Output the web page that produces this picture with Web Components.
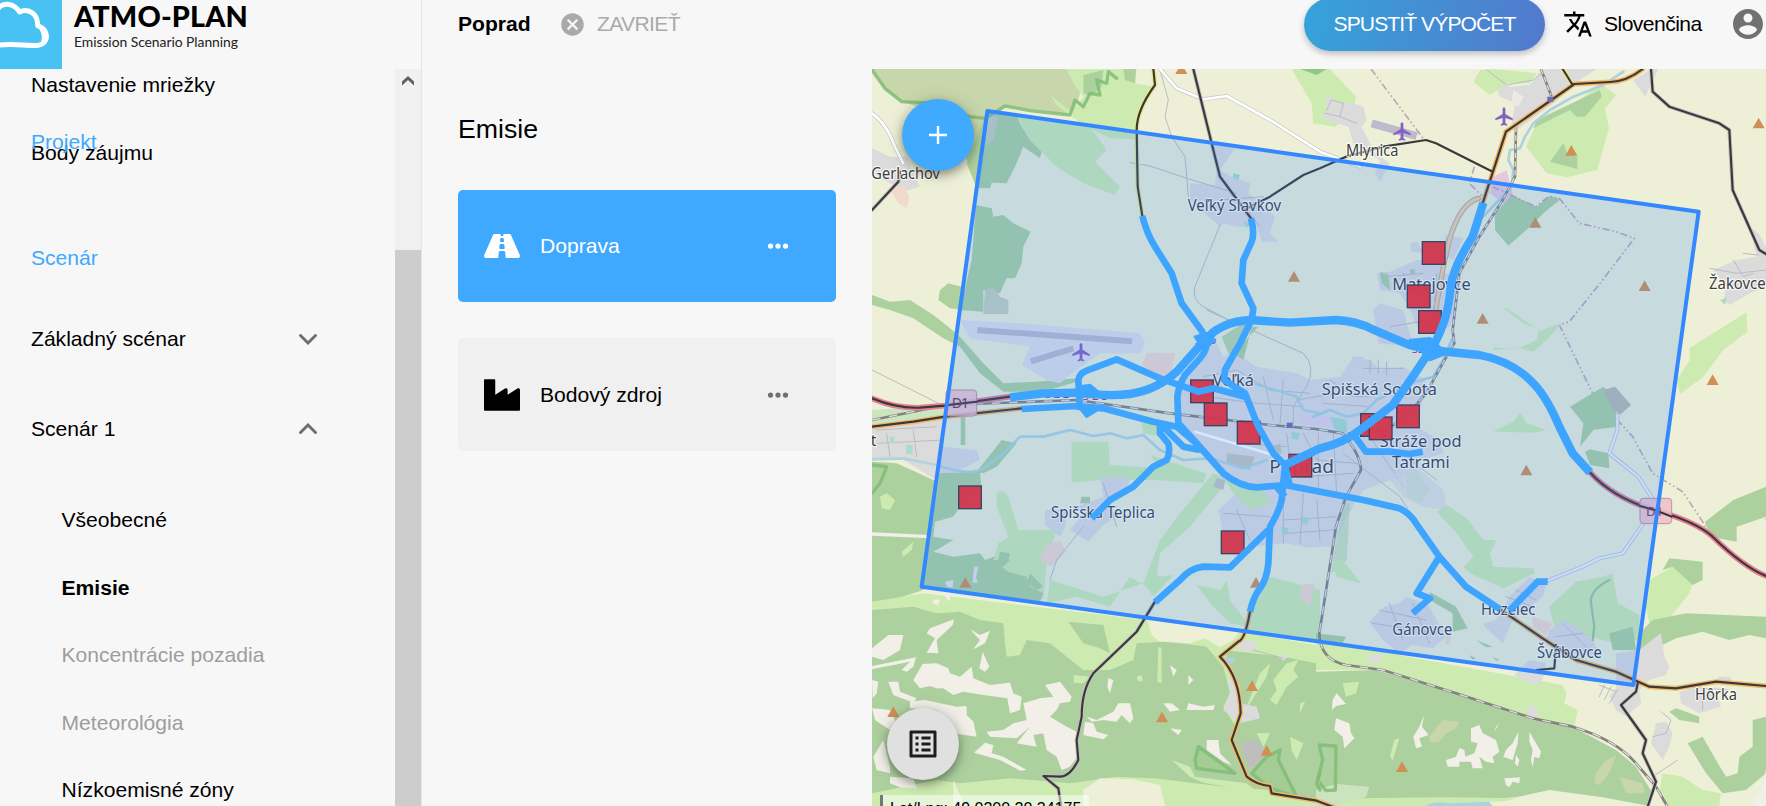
<!DOCTYPE html>
<html lang="sk">
<head>
<meta charset="utf-8">
<title>ATMO-PLAN</title>
<style>
html,body{margin:0;height:100%;overflow:hidden;background:#f7f7f7}
body{font-family:"Liberation Sans",Arial,sans-serif;font-size:21.1px;color:#000}
</style>
</head>
<body>
<atmo-app></atmo-app>

<template id="t-app">
<style>
:host{display:grid;grid-template-columns:422px 1fr;grid-template-rows:69px 737px;width:1766px;height:806px;overflow:hidden}
.side{overflow:hidden;display:flex;border-right:1px solid #e6e6e6;box-sizing:border-box}
atmo-logo{border-right:1px solid #e6e6e6;box-sizing:border-box}
.main{display:grid;grid-template-columns:450px 894px;overflow:hidden}
.panel{padding:0 36px}
h1{font-size:26.7px;font-weight:400;margin:44px 0 44px;line-height:33px}
.cards{display:grid;gap:36px}
</style>
<atmo-logo></atmo-logo>
<atmo-topbar></atmo-topbar>
<div class="side"><atmo-nav></atmo-nav><atmo-scroll></atmo-scroll></div>
<div class="main">
<div class="panel"><h1>Emisie</h1>
<div class="cards">
<atmo-card active><svg slot="icon" viewBox="0 0 576 512" width="36" height="32" fill="currentColor"><path d="M573.19 402.67l-139.79-320C428.43 71.29 417.6 64 405.68 64h-97.59l2.45 23.16c.5 4.72-3.21 8.84-7.96 8.84h-29.16c-4.75 0-8.46-4.12-7.96-8.84L267.91 64h-97.59c-11.93 0-22.76 7.29-27.73 18.67L2.8 402.67C-6.45 423.86 8.31 448 30.54 448h196.84l10.31-97.68c.86-8.14 7.72-14.32 15.91-14.32h68.8c8.19 0 15.05 6.18 15.91 14.32L348.62 448h196.84c22.23 0 36.99-24.14 27.73-45.33zM260.4 135.16a8 8 0 0 1 7.96-7.16h39.29c4.09 0 7.53 3.09 7.96 7.16l4.6 43.58c.75 7.09-4.81 13.26-11.93 13.26h-40.54c-7.13 0-12.68-6.17-11.93-13.26l4.59-43.58zM315.64 304h-55.29c-9.5 0-16.91-8.23-15.91-17.68l5.07-48c.86-8.14 7.72-14.32 15.91-14.32h45.15c8.19 0 15.05 6.18 15.91 14.32l5.07 48c1 9.45-6.41 17.68-15.91 17.68z"/></svg>Doprava</atmo-card>
<atmo-card><svg slot="icon" viewBox="0 0 512 512" width="36" height="36" fill="currentColor"><path d="M475 164L336 252V184c0-19-21-30-37-20L160 252V48c0-9-7-16-16-16H16C7 32 0 39 0 48v416c0 9 7 16 16 16h480c9 0 16-7 16-16V184c0-19-21-30-37-20z"/></svg>Bodový zdroj</atmo-card>
</div></div>
<atmo-map></atmo-map>
</div>
</template>

<template id="t-logo">
<style>
:host{display:flex;overflow:hidden}
.t{padding-left:12px;white-space:nowrap;font-family:Lato,sans-serif}
b{display:block;font-weight:900;font-size:28.8px;line-height:32px;letter-spacing:.15px}
span{display:block;font-size:13.9px;line-height:20px;letter-spacing:-.05px;color:#222}
</style>
<svg width="62" height="69" viewBox="0 0 186 207"><rect width="186" height="207" fill="#48c1f3"/><path d="M-8 28C12 2 44 12 59 36c22-12 55 2 54 41 34 14 36 52 2 59-34 4-70-8-123 0" fill="none" stroke="#fff" stroke-width="15" stroke-linejoin="round"/><path d="M108 76c40 10 46 56 10 66 12-26 10-46-10-66z" fill="#fff"/></svg>
<div class="t"><b>ATMO-PLAN</b><span>Emission Scenario Planning</span></div>
</template>

<template id="t-topbar">
<style>
:host{display:flex;height:48px;align-items:center;padding-left:36px;position:relative;z-index:2}
svg{display:block;flex:none}
b{width:101px;flex:none}
.close{display:flex;align-items:center;gap:11px;color:#aaa;letter-spacing:-.65px}
.grow{flex:1}
.run{width:241px;height:53px;border-radius:27px;display:grid;place-items:center;color:#fff;background:linear-gradient(100deg,#35a3db,#5379cc);box-shadow:0 3px 6px rgba(0,0,0,.24);letter-spacing:-.92px;line-height:24px}
.lang{display:flex;align-items:center;gap:11px;margin-left:18px;width:167px}
.lang span{letter-spacing:-.55px}
</style>
<b>Poprad</b>
<div class="close"><svg width="27" height="27" viewBox="0 0 24 24" fill="#aaa"><path d="M12 2C6.47 2 2 6.47 2 12s4.470 10 10 10 10-4.470 10-10S17.530 2 12 2zm5 13.590L15.590 17 12 13.410 8.410 17 7 15.590 10.590 12 7 8.410 8.410 7 12 10.590 15.590 7 17 8.410 13.410 12 17 15.590z"/></svg><span>ZAVRIEŤ</span></div>
<div class="grow"></div>
<div class="run">SPUSTIŤ VÝPOČET</div>
<div class="lang"><svg width="30" height="30" viewBox="0 0 24 24"><path d="M12.870 15.070l-2.540-2.510.030-.030c1.740-1.940 2.980-4.170 3.710-6.530H17V4h-7V2H8v2H1v1.990h11.170C11.500 7.920 10.440 9.750 9 11.350 8.070 10.320 7.300 9.190 6.690 8h-2c.730 1.630 1.730 3.170 2.980 4.560l-5.090 5.020L4 19l5-5 3.110 3.110.760-2.040zM18.500 10h-2L12 22h2l1.120-3h4.750L21 22h2l-4.500-12zm-2.620 7l1.620-4.330L19.120 17h-3.240z"/></svg><span>Slovenčina</span></div>
<svg width="36" height="36" viewBox="0 0 24 24" fill="#717171"><path d="M12 2C6.480 2 2 6.480 2 12s4.480 10 10 10 10-4.480 10-10S17.520 2 12 2zm0 3c1.660 0 3 1.340 3 3s-1.340 3-3 3-3-1.340-3-3 1.340-3 3-3zm0 14.200c-2.500 0-4.710-1.280-6-3.220.030-1.990 4-3.080 6-3.080 1.990 0 5.970 1.090 6 3.080-1.290 1.940-3.500 3.220-6 3.220z"/></svg>
</template>

<template id="t-nav">
<style>
:host{display:block;width:395px;height:737px;overflow:hidden;position:relative}
div{height:67.5px;line-height:67.5px;padding-left:31px;white-space:nowrap;box-sizing:border-box}
.first{margin-top:-18px}
.blue{color:#3fa9ff}
.sec{margin-top:38px;margin-bottom:2.500px}
.grp{height:90px;line-height:90px;display:flex;align-items:center;justify-content:space-between;padding-right:77px}
.sub{padding-left:61.500px}
.grp+.sub{margin-top:12px}
.off{color:#9d9d9d}
.stick{position:absolute;left:0;top:39px}
</style>
<div class="first">Nastavenie mriežky</div>
<div>Body záujmu</div>
<div class="blue sec">Scenár</div>
<div class="grp">Základný scénar<svg width="20" height="12"><path d="M2.500 2.500L10 10l7.500-7.500" fill="none" stroke="#6e6e6e" stroke-width="2.900" stroke-linecap="round"/></svg></div>
<div class="grp">Scenár 1<svg width="20" height="12"><path d="M2.500 9.500L10 2l7.500 7.500" fill="none" stroke="#6e6e6e" stroke-width="2.900" stroke-linecap="round"/></svg></div>
<div class="sub">Všeobecné</div>
<div class="sub"><b>Emisie</b></div>
<div class="sub off">Koncentrácie pozadia</div>
<div class="sub off">Meteorológia</div>
<div class="sub">Nízkoemisné zóny</div>
<div class="stick blue">Projekt</div>
</template>

<template id="t-scroll">
<style>
:host{display:flex;flex-direction:column;width:26px;background:#f0f0f0;height:737px}
svg{height:181px;flex:none}
i{flex:1;background:#cdcdcd}
</style>
<svg width="26" height="181"><path d="M7 12.500L13 7l6 5.500v4L13 11l-6 5.500z" fill="#606060"/></svg><i></i>
</template>

<template id="t-card">
<style>
:host{display:flex;align-items:center;height:112px;border-radius:5px;background:#f0f0f0;padding:0 43px 0 26px;box-sizing:border-box;width:378px}
:host([active]){background:#3fa9ff;color:#fff;--dot:#fff}
:host(:not([active])){height:113px}
span{flex:1}
.i{width:56px;display:flex;align-items:center}
</style>
<div class="i"><slot name="icon"></slot></div><span><slot></slot></span>
<svg width="30" height="30" viewBox="0 0 24 24" style="fill:var(--dot,#707070)"><circle cx="6" cy="12" r="2.100"/><circle cx="12" cy="12" r="2.100"/><circle cx="18" cy="12" r="2.100"/></svg>
</template>

<template id="t-fab">
<style>
:host{position:absolute;width:72px;height:72px;border-radius:50%;display:grid;place-items:center;box-shadow:0 4px 10px rgba(0,0,0,.35),0 2px 20px rgba(0,0,0,.14)}
</style><slot></slot>
</template>

<template id="t-map">
<style>
:host{display:block;position:relative;width:894px;height:737px;overflow:hidden;background:#edf0d6}
.base{display:block}
.f{fill:#add19e}.g{fill:#cdebb0}.s{fill:#c8d7ab}.r{fill:#dcdbdc}.k{fill:#f2efe9}.o{fill:#f2dacb}.w{fill:#aad3df}
.ln{fill:none;stroke-linejoin:round;stroke-linecap:round}
.thin{stroke:#bdbcc4;stroke-width:3}
.river{stroke:#aad3df;stroke-width:8}
.white{stroke:#fff;stroke-width:8}
.wc{stroke:#c5c3c3;stroke-width:12}
.dk{stroke:#3a3838;stroke-width:6.500}
.bnd{stroke:#c2a3bd;stroke-width:5;stroke-dasharray:22 8 5 8 5 8;stroke-linecap:butt}
.edge{stroke:#7fbd74;stroke-width:10;opacity:.85}
.lb text{font-family:"Noto Sans",sans-serif;font-size:47px;fill:#3d3d3d;stroke:#fff;stroke-opacity:.75;stroke-width:7;paint-order:stroke;stroke-linejoin:round}
.lb .red{fill:#a2305c;font-size:34px;stroke-width:3}
.pk{fill:#d08f55}
.pl{fill:#8461c4}
.blue{stroke:#3da4ff;stroke-width:20;stroke-linecap:butt}
.sq rect{width:68px;height:68px;fill:#d13850;stroke:#34405e;stroke-width:4}
.add{left:30px;top:30px;background:#40aaff}
.leg{left:15px;top:639px;background:#e0e0e0}
.coord{position:absolute;left:8px;top:726px;height:24px;box-sizing:border-box;width:209px;border-left:3px solid #777;background:rgba(255,255,255,.5);padding-left:7px;font-size:16px;line-height:28px;white-space:pre}
</style>
<svg class="base" width="894" height="737" viewBox="6 27 2682 2211">
<defs>
<path id="peak" d="M0-17L18 15H-18z"/>
<path id="plane" transform="scale(2.750) translate(-11.500 -12)" d="M21 16v-2l-8-5V3.500c0-.830-.670-1.500-1.500-1.500S10 2.670 10 3.500V9l-8 5v2l8-2.500V19l-2 1.500V22l3.500-1 3.500 1v-1.500L13 19v-5.500l8 2.500z"/>
<path id="rail" d="M6 1080L230 1035 620 1020 900 1060 1200 1095 1338 1107 1418 1120Q1470 1180 1473 1230L1428 1310 1398 1400 1348 1720Q1350 1800 1428 1815L1538 1830 1758 1900 1988 1975 2108 2000Q2240 2040 2298 2110L2358 2180 2398 2250"/>
<path id="rail2" d="M2013 27L2043 105M1938 200L1935 350 1898 420 1828 530 1768 640 1748 810 1753 850 1718 910 1668 1000 1608 1070 1548 1110 1438 1120"/>
</defs>
<!-- north-west -->
<path class="s" d="M6 27H590L640 70 610 165 540 155 405 140 350 185 325 330 290 300 270 180 100 127 40 85z"/>
<path class="g" d="M590 27H800L795 70 850 80 800 180V238L720 235 640 195 600 165 640 110 610 70zM540 105L610 160 600 168 560 135zM440 165L660 200 710 270 675 305 750 380 735 405 640 370 560 320 480 240z"/>
<path class="f" d="M350 153L440 165 450 190 480 240 515 275 510 295 460 260 440 310 410 370 365 368 360 385 320 385 290 310zM318 435L365 445 370 470 400 465 430 490 482 515 460 560 455 610 435 655 410 655 390 700 340 690 340 755 270 750 305 600zM235 670L275 680 282 750 240 745 205 720 210 690zM6 705L60 725 120 720 190 765 235 800 270 830 340 910 400 970 500 965 620 955V965L520 995 400 995 330 940 270 860 220 835 130 775 60 750 6 735zM640 45L700 30 695 80 660 110 640 100zM760 27H798L795 70 765 60z"/>
<path d="M345 690L370 680 390 710 415 720V762H340zM350 165L385 170 370 240 345 260z" fill="#c6cfb9"/>
<path class="ln edge" d="M6 30L45 85 95 125 200 130 300 170 345 175 405 138 480 152 600 165 615 120 640 140 660 100 690 105 680 60 710 70 715 35 740 55"/>
<path class="r" d="M6 265L60 290 110 290 130 340 150 380 100 395 60 370 6 340zM1030 245L1095 265 1050 330 1085 350 1140 370 1135 400 1215 470 1200 520 1225 545 1175 545 1160 500 1100 500 1060 490 1050 500 960 420 960 370 1035 375 1040 330z"/>
<path class="o" d="M60 390L100 375 118 410 110 445 85 430zM830 878L915 880 905 930 870 955 815 915z"/>
<path class="g" d="M1265 27H1380L1458 110 1450 160 1395 200 1330 190 1325 130z"/>
<path class="f" d="M1290 27H1370L1340 45z" style="fill:#8cc983"/>
<!-- airport -->
<path d="M270 780L450 790 810 820 825 850 810 880 690 880 600 945 570 970 530 960 455 915 480 860 300 835z" fill="#dfdfe8"/>
<path d="M322 810L786 844M482 904L610 865" stroke="#bbbbcc" stroke-width="18" fill="none"/>
<!-- west -->
<path d="M6 1050L230 1035V1090L6 1105z" fill="#c9e6c0"/>
<path class="r" d="M6 1105L225 1070 220 1160 320 1170 330 1200 250 1240 190 1255 100 1200 6 1195z"/>
<path class="f" d="M6 1205L80 1210 195 1262 160 1590 6 1640zM210 1240L330 1235 335 1290 290 1310 250 1370 195 1385 190 1430 250 1440 190 1475 250 1490 330 1480 345 1500 400 1480 500 1530 500 1630 155 1580zM395 1140L440 1150 380 1220 340 1240 320 1235zM272 1070H286V1155H272z"/>
<path class="g" d="M605 1145H715L720 1215 870 1225 840 1185 990 1235 1010 1240 1000 1270 850 1260 690 1260 605 1268zM380 1300Q400 1280 415 1310L445 1410 560 1410 530 1510 520 1620 370 1500 385 1450 415 1430 380 1340zM1030 1240L1075 1260 960 1400 870 1480 860 1550 910 1545 850 1610 830 1580 780 1550 720 1640 620 1610 530 1630 540 1560 700 1610 820 1570 870 1440 930 1360zM815 1090L870 1085 880 1130 820 1120zM980 1575L1050 1590 1070 1560 1080 1620 1140 1700 1080 1690 1030 1640zM1200 1550L1350 1590V1750L1130 1710 1140 1660z"/>
<path class="o" d="M530 1455L570 1440 588 1475 545 1520 508 1500zM1295 1575L1335 1570 1320 1640 1290 1610z"/>
<path class="r" d="M690 1250L780 1255 770 1300 720 1330 740 1370 700 1395 655 1445 600 1410 640 1360 620 1340 700 1310zM525 1350L590 1350 585 1400 570 1430 525 1395z"/>
<path class="f" d="M390 1475L420 1480 415 1505 385 1500zM480 1540L520 1580 500 1590 470 1570zM635 1310H660V1330H630z"/>
<path class="k" d="M6 1417L180 1425V1435L6 1427z"/><path class="g" d="M30 1310L50 1300 75 1320 60 1350 35 1345zM95 1475L130 1445 125 1470 100 1490z"/>
<path class="ln edge" d="M6 1215L50 1220 30 1270 6 1300"/>
<!-- Poprad -->
<path class="r" d="M985 870L1040 850 1060 890 1100 880 1160 920 1280 940 1320 960 1410 950 1450 890 1500 900 1530 930 1600 920 1668 960 1660 1010 1640 1100 1710 1140 1720 1180 1650 1200 1640 1240 1560 1260 1480 1290 1430 1370 1390 1460 1310 1462 1250 1450 1140 1460 1060 1425 1045 1350 1100 1300 1060 1260 1000 1190 930 1120 930 960zM1420 960H1480V1080L1400 1100z" fill-opacity=".95"/>
<path d="M1120 900L1145 800 1165 800 1090 880z" fill="#add19e"/>
<path class="f" d="M1055 830L1135 780 1080 890z" opacity=".8"/><path class="g" d="M1060 1250L1180 1290 1200 1330 1140 1350 1090 1300z"/>
<path d="M1070 1180L1155 1190 1140 1230 1070 1210zM1040 1255L1065 1260 1060 1290 1030 1280zM1210 1160L1230 1150 1235 1180 1210 1185z" fill="#c5c5bf"/>
<path d="M1290 1060L1420 1075 1420 1105 1290 1090z" fill="#e4d3e6"/>
<path class="ln thin" d="M1000 950L1100 930 1200 990 1320 1000M1010 1010L1160 1030 1300 1040M1180 950L1210 1080M1240 960L1230 1090M1280 1020L1400 1000M1380 960L1450 1010 1500 1010M1360 1030L1500 1040M1100 1150L1250 1160M1250 1120L1260 1200M1300 1120L1340 1200 1460 1210M1345 1120L1345 1300M1390 1120L1400 1300M1300 1250L1450 1240M1060 1360L1200 1370M1100 1350L1140 1440M1240 1320L1240 1450M1300 1300L1290 1450M1340 1320L1350 1440M1240 1380L1400 1370M1250 1420L1390 1410M1500 900L1500 940M1525 900V940M1550 905V945M1480 925H1600M1500 1130L1600 1280M1620 1200L1700 1260M1420 1180L1590 1310 1640 1390M700 1270L740 1400M640 1350L740 1340M640 1400L560 1500 540 1560M20 1110L200 1100M50 1120L60 1190M130 1110L140 1190M20 1150L220 1140M780 308L840 318 950 355 1100 400"/>
<path class="ln thin" d="M870 30L895 120 885 170 905 230 945 290 955 410M1050 495L975 680Q965 720 1000 740L1075 780M1010 750L1300 880Q1340 920 1310 980L1270 1040V1090M6 930L215 1035M1060 360L1170 500M1050 420L1180 410"/>
<path fill="#a9dccb" d="M1265 1115L1290 1120 1285 1140 1265 1135zM1300 1370L1320 1375 1310 1395 1295 1390zM1235 1400L1255 1405 1250 1425 1235 1420zM1120 485L1140 490 1130 505zM1090 340L1110 345 1105 360 1088 355zM60 1130H72V1150H60zM108 1155H128V1182H108zM1380 1070L1430 1080 1430 1120 1400 1120z"/>
<!-- Velky lom and Matejovce -->
<path class="r" d="M1370 100L1395 125 1450 130 1480 140 1490 180 1475 200 1515 280 1560 310 1530 365 1515 340 1530 300 1450 250 1435 200 1355 175 1370 150zM1870 60L1920 80 1980 75 2010 35 2030 27H2180L2130 60 2050 130 1940 210 1925 190 1935 130 1890 110zM2290 60L2345 27H2365L2340 80 2325 110zM1525 850L1510 750 1530 730 1600 750 1630 860zM1530 690L1520 640 1560 635 1640 600 1700 600 1720 640 1770 650 1760 720 1740 800 1650 820 1620 750 1590 700zM1620 550L1640 545 1665 580 1625 575zM1725 525L1780 535 1750 600 1725 585zM1450 890L1480 890 1490 920 1450 910z"/>
<path fill="#efe9e4" d="M1930 90L1960 110 1945 140 1925 130z"/>
<path fill="#e6c9dc" d="M1870 350L1910 330 1930 410 1905 435 1860 400z"/>
<path class="g" d="M1830 30L1870 27 2000 40 1980 70 1910 70 1860 105 1810 65zM2190 70L2238 105 2205 145 2217 205 2182 330 2090 352 2030 340 1968 260 2000 190 2080 160z"/>
<path class="f" d="M2190 90L2195 110 2145 170 2120 170 2100 150 1990 205 2000 180zM2080 250L2090 275 2122 292 2122 327 2040 305z"/>
<path class="f" d="M1925 405L2000 440 2040 408 2072 418 2020 460 1980 500 1915 557 1875 510 1875 460z"/>
<path class="ln river" d="M2260 35L2200 75 2110 110 2040 150 1990 190 1965 230 1950 265 1920 270 1915 300 1930 330 1925 380 1840 470M1745 840L1720 900 1690 950 1620 970 1520 1020 1480 1060 1430 1070 1380 1050 1330 1070"/>
<path class="ln river" stroke-opacity=".9" d="M6 1198L100 1195 200 1215Q300 1250 340 1225L400 1180 450 1130 520 1130 600 1110 670 1128 720 1120 770 1135 820 1125 870 1170 940 1200 1020 1195 1120 1225 1190 1200M1150 970L1280 1010 1300 1050 1350 1060"/>
<path class="ln" stroke="#bbbbcc" stroke-width="24" d="M1505 190L1640 228" style="stroke-linecap:butt"/>
<path class="ln" stroke="#c4aa8c" stroke-width="16" d="M1825 415Q1770 430 1738 540L1720 620 1690 790"/><path class="ln" stroke="#eccfae" stroke-width="10" d="M1825 415Q1770 430 1738 540L1720 620 1690 790"/>
<path class="ln thin" d="M1365 160L1410 170 1420 130 1385 120 1370 150M1410 170L1460 190M1850 30L1910 75 1990 60 2020 35M1550 650L1660 640M1600 640L1610 680M1560 800L1680 780M1700 640L1690 780"/>
<path fill="#add19e" d="M1530 635L1555 645 1560 690 1535 670zM1620 628H1635V642H1620z"/>
<path class="ln bnd" d="M1503 27L1663 240M1813 320L1798 370 1838 410M1868 380L1998 440 2038 408 2068 415 2128 490 2238 515 2293 535 2198 660 2098 785 2068 795 2168 1000 2288 1130 2348 1240 2438 1295 2508 1400 2538 1420 2676 1340 2690 1380"/>
<!-- east -->
<path class="r" d="M2530 630L2600 600 2660 590 2640 500 2665 520 2688 560V680L2640 700 2580 735 2560 720 2570 680z"/><path class="ln thin" d="M2520 625L2600 640 2688 630M2590 600L2620 650 2650 640M2620 580L2665 585"/>
<path fill="#a9dcc0" d="M2550 720L2570 715 2565 735z"/>
<path class="g" d="M2630 757L2632 815 2560 870 2500 950 2430 1003 2420 960 2460 900 2458 865z"/>
<path class="f" d="M2100 1040L2200 980 2238 1020 2240 1100 2170 1110 2130 1160 2140 1090zM2145 1175L2160 1168 2215 1180 2218 1225 2160 1215zM2688 1280V1370L2600 1400 2600 1445 2520 1430 2505 1385 2590 1320z"/>
<path d="M2200 990L2235 980 2283 1035 2250 1065 2225 1040z" fill="#b9b9ad"/>
<path class="g" d="M1870 1115L1930 1085 1950 1058 1970 1090 2030 1110 1990 1118zM1870 862L1940 868 2000 840 2008 808 1960 790 1900 745H1910L1970 785 2010 812 2075 790 2030 840 1990 875 1950 865 1870 870zM1700 1355L1730 1335 1790 1375 1840 1440 1880 1440 1860 1480 1870 1520 1990 1525 1995 1540 1900 1585 1800 1540 1780 1520 1810 1490 1760 1420zM1610 1245L1640 1235 1680 1290 1650 1330 1610 1310z"/>
<path class="f" d="M1425 1330L1440 1330 1430 1500 1385 1540 1395 1460z" opacity=".5"/>
<path class="r" d="M1580 1230L1640 1220 1720 1290 1730 1350 1660 1340 1600 1310 1560 1260z" opacity=".7"/>
<path class="ln" stroke="#bac3d6" stroke-width="12" d="M2242 1065V1110L2218 1180 2305 1250 2350 1320M2320 1390L2258 1480 2188 1495 2138 1520 2038 1560 2000 1572"/><path class="ln" stroke="#eef0f5" stroke-width="7" d="M2242 1065V1110L2218 1180 2305 1250 2350 1320M2320 1390L2258 1480 2188 1495 2138 1520 2038 1560 2000 1572"/>
<!-- south-east -->
<g transform="translate(1338 1500)">
<path class="g" d="M0 240L740 375 752 400 745 430 785 450 775 500 600 470 400 400 200 330 0 330zM50 0H80L135 70 60 50zM1000 60L1070 20 1140 45 1120 100 1080 150 1040 200 1000 190 985 120zM700 140L780 65 860 50 890 40 905 130 970 165V240L900 250 820 230 720 220z"/>
<path class="f" d="M1040 30L1060-5 1160 5 1160 60 1130 75 1070 20zM970 220L1010 180 1110 160 1350 170V235L1300 225 1240 240 1160 215 1080 235 970 290zM880 220L950 200 960 270 890 270zM340 95L420 140 455 205 410 215 410 160 350 125zM0 240V220L90 230 80 250zM1115 550L1160 530 1200 600 1230 650 1265 640 1270 590 1310 560 1310 480 1350 470V640L1290 690 1220 700 1170 640zM480 240L530 260 510 262zM530 290L550 300 540 302zM460 285L480 295 470 300zM0 335L180 330 420 400 650 480 770 500 900 570 960 620 1010 700 1000 738 860 712 700 690 600 712 400 725 0 738z"/>
<path class="g" d="M1040 640L1100 650 1160 690 1215 700 1210 738 1050 738 1030 700zM0 740L120 715 400 712 600 715 520 738zM80 370L130 365 120 400 90 410zM235 540L250 535 230 600 222 590z"/>
<path d="M520 725Q620 725 700 695L860 715 900 738H500z" fill="#edf0d6"/>
<path d="M0 690L60 672 160 680 150 710 60 738H0z" fill="#cbe3bf"/>
<path class="w" d="M330 738Q350 720 400 730L520 725 530 738z"/>
<path class="s" d="M340 530L380 480 430 485 420 505 390 520 370 545 345 548zM840 640L870 600 900 585 880 640 850 675 835 670zM910 650L980 670 985 700 930 700z"/>
<path class="k" d="M60 475L100 490 105 520 115 535 85 565 80 530 55 510zM50 420L62 400 90 432 60 438 48 450zM325 465L318 500 338 525 310 535 318 560 300 565 292 530 310 500zM465 505L490 495 500 520 540 540 550 575 530 590 535 610 510 605 490 590 500 625 470 625 465 605 430 605 430 620 395 620 390 600 420 590 430 565 445 570 448 590 475 580 485 550 465 545zM550 490L540 500 535 515zM607 515L605 550 590 600 562 590 570 570 590 550zM640 515L675 575 670 595 655 590 650 622 645 600 650 570 640 545zM600 585L610 600 605 620 597 610zM565 655L612 652 610 670 590 665 580 682 570 675zM1350 625V738H1315L1310 720 1340 690z"/>
<path class="ln edge" d="M10 555L60 558 58 690 30 692 5 660 20 600z"/>
<path class="r" d="M205 140L250 130 270 110 300 120 340 140 390 230 350 265 290 255 250 280 200 240 160 185zM505 190L540 180 580 110 640 50 690 75 680 110 630 150 590 180 560 250 505 200zM700 210L740 180 770 195 830 240 850 285 720 280 690 240zM595 345L640 300 690 310 685 345 670 375 640 370zM900 280L970 270 1020 230 1035 220 1045 290 1060 320 1050 345 1000 360 970 390 975 430 930 470 900 450 880 410 900 385zM1090 395L1130 385 1200 400 1215 440 1150 460 1095 430zM1020 490L1050 485 1070 520 1060 560 1040 600 1005 550zM155 290L200 275 190 310 160 310zM630 445L650 435 670 470 640 470zM1205 350H1245V365H1205z"/>
<path class="o" d="M650 170L710 190 690 225 650 200zM390 225L405 230 400 255 388 250z"/>
<path class="ln thin" d="M190 150L330 180M220 130L260 240M290 130L340 250M170 190L370 220M570 110L650 140M600 90L660 120M740 190L820 270M720 230L800 220M865 375L850 410M885 380L865 420M905 390L880 430M850 375L900 395M1090 380L1240 390M1035 455L1065 480 1050 520 1010 530M1085 600L1010 650M1160 450V420"/>
<path class="f" d="M1060 455L1080 445 1110 455 1150 470 1150 490 1090 480z"/>
<path class="ln" stroke="#9dc69b" stroke-width="7" d="M880 60Q820 90 825 130L835 200 830 240"/>
</g>
<!-- mountains in the south -->
<g transform="translate(0 1500)">
<path class="g" d="M6 125L160 100 830 180 1110 215 1338 255V738H6z"/>
<path d="M832 180L1110 215 1090 240 1050 262 1005 235 960 250 870 245 845 225z" fill="#edf0d6"/>
<path class="f" d="M6 150L130 140 200 160 270 155 330 180 400 190 405 250 410 290 450 285 470 240 540 250 590 290 640 330 720 330 790 300 800 250 880 245 930 250 1010 260 1060 320 1080 400 1060 440 1110 520 1120 600 1140 650 1200 690 1060 680 940 665 850 655 740 650 600 670 420 655 270 670 200 660 6 700zM595 185L700 195 720 280 690 265 640 250zM1060 270L1240 290 1338 310V730L1210 700 1140 650 1090 540 1115 450 1110 380z"/>
<path d="M640 690L690 655 790 658 870 675 885 738H640zM250 660L285 738H250z" fill="#edf0d6"/>
<path class="g" d="M120 100L130 105 130 130 160 135H100L120 130zM865 260L875 265V370L862 365zM800 350L815 345 818 365 803 362zM610 345L660 350 640 370 612 368zM1170 340L1200 310 1190 350 1140 430 1130 440zM1210 360L1250 310 1285 300 1270 330 1285 350 1250 380 1220 435 1200 420 1220 390zM1290 430L1305 425 1290 460zM1260 530L1300 550 1280 600 1265 570zM905 600L960 620 975 650 1130 670 1180 710 1120 690 1000 668 960 650zM1160 520L1200 520 1180 560zM410 160L520 165 510 180 420 175z"/>
<path class="k" d="M100 225L90 270 40 300 6 290V265L55 225zM252 178L248 195 200 240 205 280 170 278 195 235 170 220 180 205zM300 208L330 225 360 212 345 250 310 268 330 240zM338 275L358 320 345 335 328 325zM138 292L130 320 110 335 95 330 120 305 6 328V318zM158 312L200 310 235 325 240 340 270 350 305 320 310 355 360 375 420 368 430 400 455 410 450 450 420 460 412 415 340 405 280 395 250 405 220 385 200 385 180 378 150 385 130 360zM55 365L85 365 90 395 140 415 130 428 70 405zM120 425L165 420 260 440 290 438 290 465 310 485 320 530 250 520 200 450 120 445zM6 360L25 365 20 400 8 415zM6 445L60 450 80 490 60 510 15 480zM40 540L60 620 60 640 20 630 10 590zM60 650L130 655 140 685 90 682 60 670zM525 375L570 365 605 410 600 425 570 430 560 450 540 470 590 500 620 515 622 590 600 620 575 630 560 590 530 570 520 520 490 525 500 560 440 550 480 500 440 535 360 530 350 515 400 510 430 490 470 480 460 430 510 415 550 410zM345 548L370 555 365 580 400 590 470 630 450 632 390 600 312 578zM650 470L680 480 730 455 745 430 780 430 790 475 780 490 755 465 740 485 700 480 665 485zM645 485L670 490 680 515 715 525 700 538 640 525zM715 355L730 360 720 400 712 380zM900 315L920 330 910 350zM955 345L970 360 955 375zM955 430L1000 440 1035 435 1030 450 950 450zM880 430L905 430 930 450 900 455zM900 505L935 510 925 525zM1010 540L1045 540 1050 580 1085 615 1060 605 1010 570zM190 120L210 118 205 135 188 130zM225 90L240 95 240 125 225 110z"/>
<path class="f" d="M170 0H420L390 30 470 50 480 80 520 100 510 125 160 80z"/>
<path fill="#e8e3ef" d="M312 20L325 20 318 50 322 68 308 68zM225 65L250 60 248 82H232z"/>
<path class="r" d="M1075 350L1100 370 1110 430 1160 440 1170 475 1110 490 1060 450 1080 400zM1120 240L1160 245 1150 275 1100 270zM1220 285L1258 285 1240 302z"/>
<path d="M1110 550L1160 538 1185 575 1175 600 1140 628z" fill="#bfbebe"/>
<path class="w" d="M1065 290L1098 298 1085 312 1062 305z"/>
<path class="ln edge" style="fill:#a3cc94" d="M985 560L1095 640 980 625 975 600zM1145 640L1190 590 1230 570 1225 600 1250 650 1280 710 1200 685zM1350 640L1340 670 1350 690"/>
<path class="ln thin" d="M1150 270L1240 295"/>
</g>
<!-- roads -->
<path class="ln wc" d="M870 27L920 85 1000 118 1070 108 1200 180 1350 275 1470 320M6 160Q50 190 75 260L100 310"/>
<path class="ln white" d="M870 27L920 85 1000 118 1070 108 1200 180 1350 275 1470 320M6 160Q50 190 75 260L100 310M975 1115L1210 1185"/>
<use href="#rail" class="ln" stroke="#85817f" stroke-width="8"/><use href="#rail" class="ln" stroke="#ddd" stroke-width="4" stroke-dasharray="26 26" style="stroke-linecap:butt"/>
<use href="#rail2" class="ln" stroke="#85817f" stroke-width="8"/><use href="#rail2" class="ln" stroke="#ddd" stroke-width="4" stroke-dasharray="16 10" style="stroke-linecap:butt"/>
<path class="ln" stroke="#e77f93" stroke-width="17" d="M6 1015Q80 1046 150 1043L225 1037 420 1010M2158 1235Q2230 1315 2354 1350T2528 1430Q2620 1520 2688 1548"/>
<path class="ln" stroke="#e8e88a" stroke-width="14" d="M850 27L855 75Q800 150 800 210L803 380 817 468M2078 27L2108 75"/>
<path class="ln" stroke="#f0b96b" stroke-width="15" d="M6 1100L130 1085 225 1070 455 1045M2318 27Q2270 65 2220 66L2113 72 1908 215 1838 430M1140 1655Q1125 1740 1105 1745L1050 1790Q1110 1850 1112 1960L1085 2040 1130 2150Q1160 2175 1200 2178L1205 2200 1340 2222 1400 2245M1893 1650L2018 1735 2118 1800 2238 1835 2338 1880 2418 1885 2538 1865 2688 1878"/>
<path class="ln" stroke="#c4c1c1" stroke-width="12" d="M855 1625L800 1715 670 1840Q635 1890 635 1970L620 2040 625 2100Q600 2150 570 2150L520 2148 565 2185 575 2250M970 27L1035 290 1050 350 1143 475M2343 27L2348 95 2398 140 2548 190 2578 210 2588 390 2668 570 2688 582M2303 1870L2298 1895 2253 1935 2328 2040 2318 2080 2358 2165 2333 2240M6 450L85 365 90 335"/>
<path class="ln dk" d="M6 1015Q80 1046 150 1043L225 1037 420 1010M2158 1235Q2230 1315 2354 1350T2528 1430Q2620 1520 2688 1548M850 27L855 75Q800 150 800 210L803 380 817 468M2078 27L2108 75M6 1100L130 1085 225 1070 455 1045M2318 27Q2270 65 2220 66L2113 72 1908 215 1838 430M1140 1655Q1125 1740 1105 1745L1050 1790Q1110 1850 1112 1960L1085 2040 1130 2150Q1160 2175 1200 2178L1205 2200 1340 2222 1400 2245M1893 1650L2018 1735 2118 1800 2238 1835 2338 1880 2418 1885 2538 1865 2688 1878M855 1625L800 1715 670 1840Q635 1890 635 1970L620 2040 625 2100Q600 2150 570 2150L520 2148 565 2185 575 2250M970 27L1035 290 1050 350 1143 475M2343 27L2348 95 2398 140 2548 190 2578 210 2588 390 2668 570 2688 582M2303 1870L2298 1895 2253 1935 2328 2040 2318 2080 2358 2165 2333 2240M6 450L85 365 90 335M1120 450L1200 410 1300 345 1350 325 1428 290 1540 260 1668 240 1698 250 1868 335M2058 1755L2053 1825 2000 1830"/>
<rect x="2032" y="110" width="18" height="16" fill="#6b6bb0"/><rect x="1250" y="1088" width="18" height="16" fill="#6b6bb0"/>
<g fill="#eebfc9" fill-opacity=".85" stroke="#c98a9f" stroke-width="3"><rect x="228" y="990" width="92" height="78" rx="10"/><rect x="2310" y="1315" width="95" height="76" rx="10"/></g>
<path class="ln" stroke="#3a3038" stroke-width="6" d="M228 1036L320 1025M2310 1338L2354 1350 2405 1370"/>
<g class="pk"><use href="#peak" x="934" y="27"/><use href="#peak" x="1272" y="650"/><use href="#peak" x="286" y="1568"/><use href="#peak" x="1158" y="1568"/><use href="#peak" x="70" y="1956"/><use href="#peak" x="876" y="1972"/><use href="#peak" x="1146" y="1878"/><use href="#peak" x="1190" y="2072"/><use href="#peak" x="2666" y="190"/><use href="#peak" x="2104" y="272"/><use href="#peak" x="1996" y="488"/><use href="#peak" x="2324" y="678"/><use href="#peak" x="1838" y="776"/><use href="#peak" x="2528" y="960"/><use href="#peak" x="1969" y="1231"/><use href="#peak" x="1596" y="2121"/></g>
<g class="pl"><use href="#plane" x="633" y="877"/><use href="#plane" x="1902" y="170"/><use href="#plane" x="1596" y="215"/></g>
<g class="lb">
<text x="4" y="356" textLength="206" lengthAdjust="spacingAndGlyphs">Gerlachov</text><text x="953" y="453" textLength="280" lengthAdjust="spacingAndGlyphs">Veľký Slavkov</text><text x="1428" y="289" textLength="157" lengthAdjust="spacingAndGlyphs">Mlynica</text><text x="1567" y="691" textLength="235" lengthAdjust="spacingAndGlyphs">Matejovce</text><text x="2517" y="686" textLength="170" lengthAdjust="spacingAndGlyphs">Žakovce</text><text x="1028" y="978" textLength="124" lengthAdjust="spacingAndGlyphs">Veľká</text><text x="543" y="1374" textLength="312" lengthAdjust="spacingAndGlyphs">Spišská Teplica</text><text x="1198" y="1239" textLength="194" lengthAdjust="spacingAndGlyphs" style="font-size:55px">Poprad</text><text x="1355" y="1006" textLength="346" lengthAdjust="spacingAndGlyphs">Spišská Sobota</text><text x="1529" y="1162" textLength="246" lengthAdjust="spacingAndGlyphs">Stráže pod</text><text x="1566" y="1225" textLength="173" lengthAdjust="spacingAndGlyphs">Tatrami</text><text x="1567" y="1724" textLength="180" lengthAdjust="spacingAndGlyphs">Gánovce</text><text x="1833" y="1664" textLength="163" lengthAdjust="spacingAndGlyphs">Hozelec</text><text x="2001" y="1795" textLength="195" lengthAdjust="spacingAndGlyphs">Švábovce</text><text x="2475" y="1921" textLength="126" lengthAdjust="spacingAndGlyphs">Hôrka</text>
<text x="2" y="1157">t</text><text x="245" y="1045" textLength="52" style="font-size:42px;stroke:none;fill:#66354e">D1</text><text x="2328" y="1369" textLength="52" style="font-size:40px;stroke:none;fill:#8a3560">D1</text>
<text class="red" x="524" y="1015" textLength="74">322</text><text class="red" x="638" y="1019" textLength="76">323</text><text class="red" x="975" y="852" textLength="64">326</text><text class="red" x="1625" y="879">328</text>
</g>
<path d="M352 153L2486 455 2290 1875 155 1580z" fill="#38f" fill-opacity=".2" stroke="#38f" stroke-width="12" stroke-linejoin="round"/>
<g class="sq" opacity=".96"><rect x="962" y="960"/><rect x="1003" y="1029"/><rect x="1102" y="1084"/><rect x="1257" y="1183"/><rect x="266" y="1278"/><rect x="1054" y="1413"/><rect x="1657" y="545"/><rect x="1612" y="675"/><rect x="1646" y="752"/><rect x="1580" y="1035"/><rect x="1472" y="1061"/><rect x="1498" y="1071"/></g>
<g class="ln blue" style="stroke-linejoin:round">
<path d="M817 468Q830 520 855 560L905 640 935 730 995 812 1010 845M1143 475Q1155 520 1145 545L1120 600 1115 670 1150 745 1145 780 1110 850 1065 930 1062 960 1125 1000 1165 1100 1210 1180 1245 1215M455 1047L620 1038 700 1045 850 1085 920 1100 980 1150 1060 1240Q1110 1280 1160 1282L1245 1275 1350 1295 1480 1320 1588 1345Q1620 1360 1638 1390L1708 1490 1788 1580 1890 1648M630 1050L625 960Q628 940 650 932L740 898 870 955 985 995 1030 985 1125 1010M1010 845Q1012 870 990 895L945 945Q925 980 922 1010L925 1090 985 1155M870 1085V1120L895 1150Q902 1180 890 1200L850 1220 790 1280 720 1320 665 1375M1245 1215L1235 1320Q1225 1360 1200 1400L1195 1510Q1190 1560 1170 1585T1140 1655M1200 1405L1080 1522 1000 1520Q960 1525 930 1560L855 1627M1448 1120L1488 1175 1558 1175 1618 1182 1658 1175M1708 1490L1640 1600 1680 1615 1628 1660M1918 1652L2003 1565 2033 1565M870 1090L940 1160 990 1170M1245 1215L1260 1280M1215 1275L1245 1310"/>
<path stroke-width="25" d="M420 1012L520 1000 620 998Q720 1010 780 1002Q860 990 920 935L1000 845Q1050 785 1140 780L1260 788 1398 780Q1460 783 1508 808L1618 855 1678 870 1828 885Q1930 905 1990 970Q2030 1010 2068 1100L2108 1180 2160 1237M1245 1215L1350 1165Q1420 1150 1470 1110L1568 1035Q1630 950 1688 860Q1735 780 1742 680Q1750 620 1808 530L1840 428"/>
<path style="fill:#3da4ff" stroke-width="8" d="M630 980L660 975 690 1000 640 1010zM625 1040L690 1045 650 1070zM975 830L1010 820 1035 840 1000 870zM1620 840L1680 835 1730 880 1680 900z"/>
</g>
</svg>
<atmo-fab class="add"><svg width="36" height="36" viewBox="0 0 36 36"><path d="M18 9v18M9 18h18" stroke="#fff" stroke-width="2.400"/></svg></atmo-fab>
<atmo-fab class="leg"><svg width="36" height="36" viewBox="0 0 24 24" fill="#1d1d1d"><path d="M19 5v14H5V5h14m1.100-2H3.900c-.500 0-.900.400-.900.900v16.200c0 .400.400.900.900.900h16.200c.400 0 .900-.500.900-.900V3.900c0-.500-.500-.900-.900-.900zM11 7h6v2h-6V7zm0 4h6v2h-6v-2zm0 4h6v2h-6zM7 7h2v2H7zm0 4h2v2H7zm0 4h2v2H7z"/></svg></atmo-fab>
<div class="coord">Lat/Lng: 49.0200 20.34175</div>
</template>

<script>
for (const name of ['logo','topbar','nav','scroll','card','fab','map','app']) {
  const tpl = document.getElementById('t-' + name);
  customElements.define('atmo-' + name, class extends HTMLElement {
    constructor() {
      super();
      this.attachShadow({ mode: 'open' }).append(tpl.content.cloneNode(true));
    }
  });
}
</script>
</body>
</html>
